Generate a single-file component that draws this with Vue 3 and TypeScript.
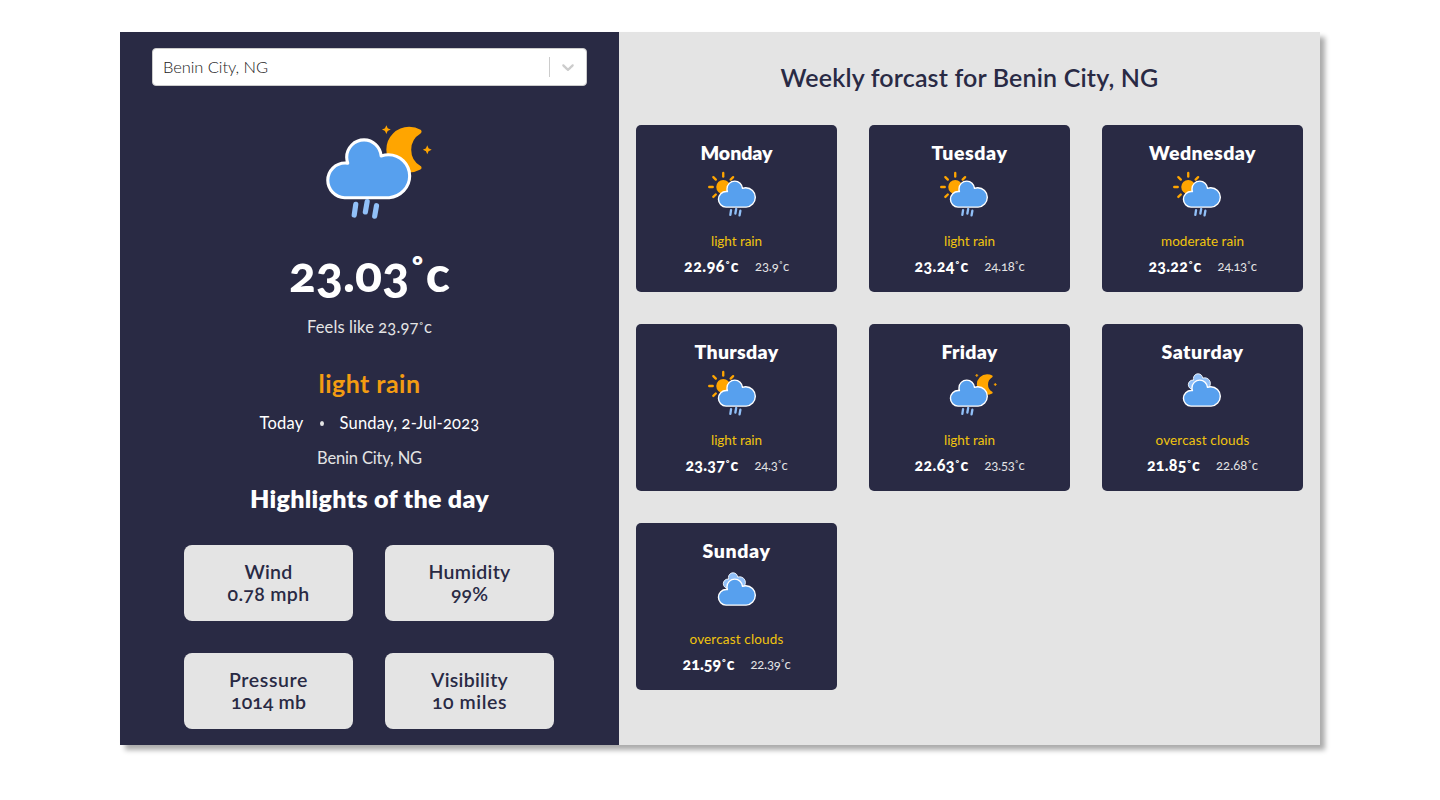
<script setup lang="ts">
interface Forecast {
  day: string
  dayWidth: number
  icon: 'day-rain' | 'night-rain' | 'clouds'
  text: string
  temp: string
  tempWidth: number
  feels: string
  feelsWidth: number
}

interface Highlight {
  label: string
  labelWidth: number
  value: string
  valueWidth: number
}

const city = 'Benin City, NG'

const forecasts: Forecast[] = [
  { day: 'Monday', dayWidth: 72, icon: 'day-rain', text: 'light rain', temp: '22.96', tempWidth: 55, feels: '23.9', feelsWidth: 34 },
  { day: 'Tuesday', dayWidth: 76, icon: 'day-rain', text: 'light rain', temp: '23.24', tempWidth: 54, feels: '24.18', feelsWidth: 40 },
  { day: 'Wednesday', dayWidth: 107, icon: 'day-rain', text: 'moderate rain', temp: '23.22', tempWidth: 53, feels: '24.13', feelsWidth: 39 },
  { day: 'Thursday', dayWidth: 84, icon: 'day-rain', text: 'light rain', temp: '23.37', tempWidth: 53, feels: '24.3', feelsWidth: 33 },
  { day: 'Friday', dayWidth: 56, icon: 'night-rain', text: 'light rain', temp: '22.63', tempWidth: 54, feels: '23.53', feelsWidth: 40 },
  { day: 'Saturday', dayWidth: 82, icon: 'clouds', text: 'overcast clouds', temp: '21.85', tempWidth: 53, feels: '22.68', feelsWidth: 42 },
  { day: 'Sunday', dayWidth: 68, icon: 'clouds', text: 'overcast clouds', temp: '21.59', tempWidth: 52, feels: '22.39', feelsWidth: 40 },
]

const descWidths: Record<string, number> = {
  'light rain': 51,
  'moderate rain': 83,
  'overcast clouds': 94,
}

const highlights: Highlight[] = [
  { label: 'Wind', labelWidth: 48, value: '0.78 mph', valueWidth: 82 },
  { label: 'Humidity', labelWidth: 82, value: '99%', valueWidth: 37 },
  { label: 'Pressure', labelWidth: 79, value: '1014 mb', valueWidth: 75 },
  { label: 'Visibility', labelWidth: 77, value: '10 miles', valueWidth: 75 },
]

const cloudPath =
  'M47.7,35.4c0-4.6-3.7-8.2-8.2-8.2c-1,0-1.9,0.2-2.8,0.5c-0.3-3.4-3.1-6.2-6.6-6.2c-3.7,0-6.7,3-6.7,6.7c0,0.8,0.2,1.6,0.4,2.3c-0.3-0.1-0.7-0.1-1-0.1c-3.7,0-6.7,3-6.7,6.7c0,3.6,2.9,6.6,6.5,6.7l17.2,0C44.2,43.3,47.7,39.8,47.7,35.4z'
const moonPath =
  'M14.5,13.2c0-3.7,2-6.9,5-8.7c-1.5-0.9-3.2-1.3-5-1.3c-5.5,0-10,4.5-10,10s4.5,10,10,10c1.8,0,3.5-0.5,5-1.3C16.5,20.2,14.5,16.9,14.5,13.2z'
const starPath = 'M0-1.2L.36-.36L1.2 0L.36.36L0 1.2L-.36.36L-1.2 0L-.36-.36Z'
const rays = [0, 45, 180, 225, 270, 315]

// Tracks the letters so that a line occupies the given width.
const vFit = {
  mounted(el: HTMLElement, binding: { value: number }) {
    const natural = el.getBoundingClientRect().width
    const count = (el.textContent ?? '').trim().length
    el.style.letterSpacing = `${(binding.value - natural) / count}px`
  },
}
</script>

<template>
  <div class="page">
    <main class="app">
      <section class="today">
        <div class="select">
          <div class="select-value"><span v-fit="105">{{ city }}</span></div>
          <span class="select-line"></span>
          <span class="select-arrow">
            <svg width="20" height="20" viewBox="0 0 20 20">
              <path d="M4.516 7.548c0.436-0.446 1.043-0.481 1.576 0l3.908 3.747 3.908-3.747c0.533-0.481 1.141-0.446 1.574 0 0.436 0.445 0.408 1.197 0 1.615-0.406 0.418-4.695 4.502-4.695 4.502-0.217 0.223-0.502 0.335-0.787 0.335s-0.57-0.112-0.789-0.335c0 0-4.287-4.084-4.695-4.502s-0.436-1.17 0-1.615z" />
            </svg>
          </span>
        </div>

        <svg class="big-icon" viewBox="8.2 14.2 48 44">
          <g transform="translate(35.9 14.7) scale(.8)">
            <path class="moon" :d="moonPath" />
          </g>
          <path class="star" :d="starPath" transform="translate(38.7 17.5)" />
          <path class="star" :d="starPath" transform="translate(54.5 25.3)" />
          <path class="cloud" :d="cloudPath" />
          <path class="drops" d="M26.9 46.4L26.3 50.5M31.3 45.3L30.6 49.3M34.9 46.9L34.2 50.9" />
        </svg>

        <div class="temperature"><span v-fit="161">23.03<i class="ring">˚</i>c</span></div>
        <div class="feels"><span v-fit="125">Feels like 23.97<i class="ring">˚</i>c</span></div>
        <div class="condition"><span v-fit="102">light rain</span></div>
        <div class="date">
          <span v-fit="44">Today</span>
          <span class="dot"></span>
          <span v-fit="140">Sunday, 2-Jul-2023</span>
        </div>
        <div class="place"><span v-fit="105">{{ city }}</span></div>
        <h2 class="highlights-title"><span v-fit="239">Highlights of the day</span></h2>

        <div class="highlights">
          <div v-for="h in highlights" :key="h.label" class="highlight">
            <div><span v-fit="h.labelWidth">{{ h.label }}</span></div>
            <div><span v-fit="h.valueWidth">{{ h.value }}</span></div>
          </div>
        </div>
      </section>

      <section class="week">
        <h2 class="week-title"><span v-fit="378">Weekly forcast for {{ city }}</span></h2>
        <div class="cards">
          <article v-for="f in forecasts" :key="f.day" class="card">
            <h3><span v-fit="f.dayWidth">{{ f.day }}</span></h3>
            <svg class="small-icon" viewBox="8 14 48 44">
              <g v-if="f.icon === 'day-rain'" transform="translate(20.2 26.6)">
                <circle class="sun" r="6" />
                <line v-for="r in rays" :key="r" class="ray" x1="0" y1="-9" x2="0" y2="-12" :transform="`rotate(${r})`" />
              </g>
              <g v-if="f.icon === 'night-rain'">
                <g transform="translate(35.9 14.7) scale(.8)">
                  <path class="moon" :d="moonPath" />
                </g>
                <path class="star" :d="starPath" transform="translate(38.7 17.5)" />
                <path class="star" :d="starPath" transform="translate(54.5 25.3)" />
              </g>
              <g v-if="f.icon === 'clouds'" transform="translate(10.6 3.2) scale(.6)">
                <path class="cloud back" :d="cloudPath" />
              </g>
              <path class="cloud" :d="cloudPath" />
              <path v-if="f.icon !== 'clouds'" class="drops" d="M26.9 46.4L26.3 50.5M31.3 45.3L30.6 49.3M34.9 46.9L34.2 50.9" />
            </svg>
            <div class="desc"><span v-fit="descWidths[f.text]">{{ f.text }}</span></div>
            <div class="temps">
              <b v-fit="f.tempWidth">{{ f.temp }}<i class="ring">˚</i>c</b>
              <span v-fit="f.feelsWidth">{{ f.feels }}<i class="ring">˚</i>c</span>
            </div>
          </article>
        </div>
      </section>
    </main>
  </div>
</template>

<style scoped>
.page {
  box-sizing: border-box;
  height: 800px;
  padding-top: 32px;
}
.app {
  width: 1200px;
  height: 713px;
  margin: 0 auto;
  display: flex;
  box-shadow: 5px 5px 5px rgba(0, 0, 0, 0.33);
  font-family: Lato, "Open Sans", sans-serif;
  font-variant-numeric: oldstyle-nums;
  font-size: 16.5px;
  white-space: nowrap;
}
.today {
  width: 499px;
  box-sizing: border-box;
  padding: 16px 32px;
  background: #292a44;
  color: #fff;
  display: flex;
  flex-direction: column;
  align-items: center;
}
.select {
  width: 100%;
  height: 38px;
  flex: none;
  box-sizing: border-box;
  display: flex;
  align-items: center;
  background: #fff;
  border: 1px solid #ccc;
  border-radius: 4px;
}
.select-value {
  flex: 1;
  padding: 0 0 1px 10px;
  font-weight: 300;
  color: #222;
}
.select-line {
  width: 1px;
  height: 20px;
  background: #ccc;
}
.select-arrow {
  width: 36px;
  display: flex;
  justify-content: center;
}
.select-arrow svg {
  fill: #ccc;
}
.big-icon {
  width: 125px;
  height: 114px;
  margin: 35px 1px 0 0;
  flex: none;
  overflow: visible;
}
.cloud {
  fill: #57a0ee;
  stroke: #fff;
  stroke-width: 1.2;
  stroke-linejoin: round;
}
.cloud.back {
  fill: #91c0f8;
}
.moon {
  fill: orange;
  stroke: orange;
  stroke-width: 2;
  stroke-linejoin: round;
}
.star {
  fill: orange;
  stroke: orange;
  stroke-width: 0.4;
}
.sun {
  fill: orange;
}
.ray {
  stroke: orange;
  stroke-width: 2;
  stroke-linecap: round;
}
.drops {
  fill: none;
  stroke: #91c0f8;
  stroke-width: 2;
  stroke-linecap: round;
}
.ring {
  font-size: 0.82em;
  font-style: normal;
  line-height: 0;
  vertical-align: 0.08em;
}
.temperature {
  margin-top: 10px;
  line-height: 56px;
  font-size: 50px;
  font-weight: 900;
}
.feels {
  margin-top: 16px;
  line-height: 20px;
  color: #e4e4e4;
}
.condition {
  margin-top: 32px;
  line-height: 28px;
  font-size: 25px;
  font-weight: 700;
  color: #f39c12;
}
.date {
  margin-top: 16px;
  line-height: 20px;
  display: flex;
  align-items: center;
}
.dot {
  width: 4px;
  height: 5px;
  margin: 0 16px;
  border-radius: 50%;
  background: #e4e4e4;
}
.place {
  margin-top: 15px;
  line-height: 20px;
  color: #e4e4e4;
}
.highlights-title {
  margin: 16px 0 0;
  line-height: 28px;
  font-size: 25px;
  font-weight: 800;
}
.highlights {
  margin: 33px 1px 0 0;
  display: grid;
  grid-template-columns: 169px 169px;
  gap: 32px;
}
.highlight {
  height: 76px;
  box-sizing: border-box;
  padding-top: 16px;
  border-radius: 8px;
  background: #e4e4e4;
  color: #292a44;
  text-align: center;
  font-size: 19.5px;
  font-weight: 600;
  line-height: 22px;
}
.week {
  flex: 1;
  padding: 31px 17px 0;
  background: #e4e4e4;
  color: #292a44;
}
.week-title {
  margin: 0;
  line-height: 28px;
  font-size: 25px;
  font-weight: 600;
  text-align: center;
}
.cards {
  margin-top: 34px;
  display: grid;
  grid-template-columns: repeat(3, 201px);
  gap: 32px;
}
.card {
  height: 167px;
  border-radius: 5px;
  background: #292a44;
  color: #fff;
  display: flex;
  flex-direction: column;
  align-items: center;
}
.card h3 {
  margin: 14px 0 0;
  line-height: 27px;
  font-size: 19.5px;
  font-weight: 800;
}
.small-icon {
  width: 56px;
  height: 52px;
  margin: 6px 1px 0 0;
  overflow: visible;
}
.card:nth-child(3n + 1) .small-icon {
  margin-right: 0;
}
.desc {
  margin-top: 8px;
  line-height: 18px;
  font-size: 13.5px;
  color: #f1c40f;
}
.temps {
  margin-top: 6px;
  line-height: 20px;
  display: flex;
  align-items: center;
  gap: 16px;
}
.temps b {
  font-size: 16px;
  font-weight: 900;
}
.temps span {
  font-size: 13px;
  color: #e4e4e4;
}
</style>

<style>
body {
  background: #fff;
}
</style>
